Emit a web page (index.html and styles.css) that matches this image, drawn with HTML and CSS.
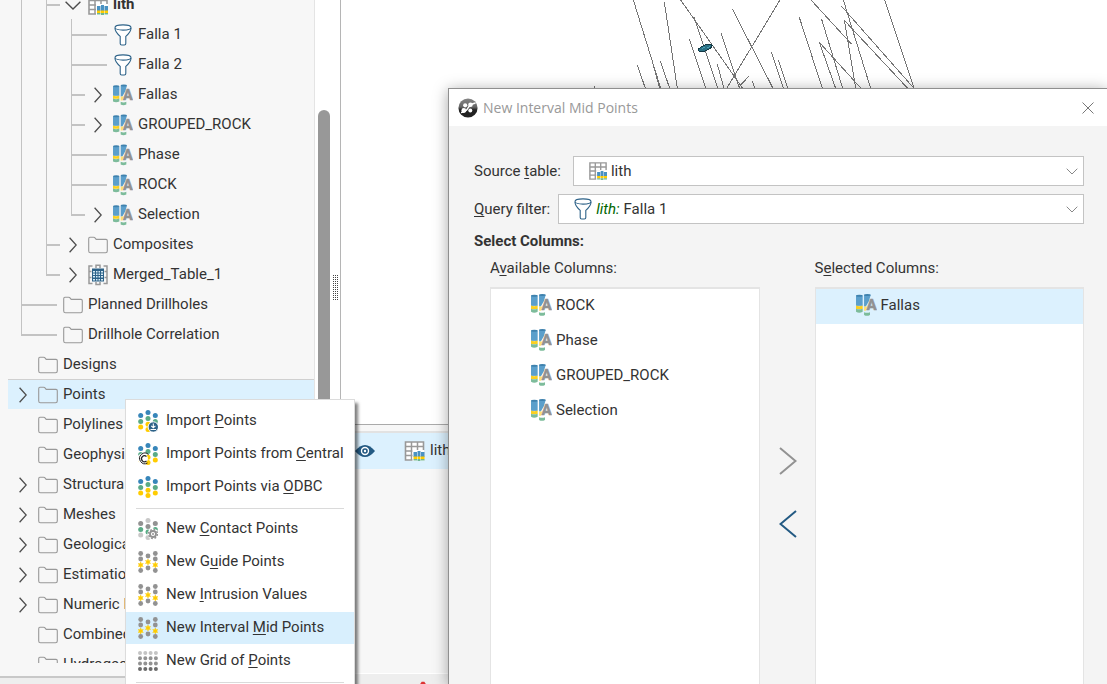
FILE: index.html
```html
<!DOCTYPE html>
<html lang="en">
<head>
<meta charset="utf-8">
<title>New Interval Mid Points</title>
<link rel="stylesheet" href="styles.css">
</head>
<body>
<svg class="defs" aria-hidden="true">
  <symbol id="i-right" viewBox="0 0 8 16"><path d="M0.6 0.8 7.2 8 .6 15.2" fill="none" stroke="#4d4d4d" stroke-width="1.3"/></symbol>
  <symbol id="i-down" viewBox="0 0 16 9"><path d="M.6 .8 8 8 15.4 .8" fill="none" stroke="#4d4d4d" stroke-width="1.4"/></symbol>
  <symbol id="i-folder" viewBox="0 0 20 17"><path d="M.7 14V2.2Q.7.9 2 .8H5.6Q6.6.8 7.200 1.600L8.200 2.900H18Q19.300 2.900 19.300 4.300V14.600Q19.300 16.300 17.600 16.300H2.500Q.7 16.300.7 14.500Z" fill="none" stroke="#999" stroke-width="1.1"/></symbol>
  <symbol id="i-filter" viewBox="0 0 20 22"><g fill="#fff" stroke="#2d6288" stroke-width="1.1"><path d="M2 4Q2 8 7.200 12.300V19.500Q7.200 21 8.700 21H11.300Q12.800 21 12.800 19.500V12.300Q18 8 18 4"/><ellipse cx="10" cy="3.500" rx="8" ry="2.600"/></g></symbol>
  <symbol id="i-column" viewBox="0 0 60 63">
    <path d="M0 5H19V34H0Z" fill="#5b9fcb"/><ellipse cx="9.500" cy="5" rx="9.500" ry="3" fill="#3f82ae"/>
    <path d="M0 33Q9 37 19 33V43H0Z" fill="#fbd021"/><path d="M0 42Q9 46 19 42V51Q9 56 0 51Z" fill="#7dbc9b"/>
    <path d="M23 3H42L37 20 28 36H23Z" fill="#5b9fcb"/><ellipse cx="32.500" cy="3" rx="9.500" ry="3" fill="#3f82ae"/>
    <path d="M23 36H33L28 48H23Z" fill="#ffe070"/><path d="M23 52Q32 56 40 52V60Q31 65 23 60Z" fill="#7dbc9b"/>
    <text x="30" y="46" class="letter">A</text>
  </symbol>
  <symbol id="i-table" viewBox="0 0 20 20">
    <path d="M1 1H19V19H1Z" fill="#fff" stroke="#999" stroke-width="1.600"/><path d="M7 1V19M13 1V12M1 5.500H19M1 10H19M1 14.500H9" stroke="#999" stroke-width="1.500" fill="none"/>
    <path d="M8 9H20V20H8Z" fill="#fff"/>
    <path d="M9 11H12.500V16H9ZM13 10H16V16H13ZM16.500 11H20V16H16.500Z" fill="#4a92c2"/><path d="M9 15.500H12.500V18H9ZM13 15.500H16V18H13ZM16.500 15.500H20V18H16.500Z" fill="#fc0"/><path d="M9 18H12.500V19.500H9ZM13 18H16V20H13ZM16.500 18H20V19.500H16.500Z" fill="#6fb592"/>
  </symbol>
  <symbol id="i-merged" viewBox="0 0 20 21">
    <path d="M4.500 1.500H1V19H4.500M15.500 1.500H19V19H15.500M1 7H3.500M1 13H3.500M16.500 7H19M16.500 13H19M8 3.500V.800H12V3.500M8 17.500V20H12V17.500" fill="none" stroke="#999" stroke-width="1.500"/>
    <path d="M4 4H16V17H4Z" fill="#2d6288"/><path d="M5 6.500H7V8H5ZM5 9H7V10.500H5ZM5 11.500H7V13H5ZM5 14.500H7V16H5ZM8 6.500H9.500V8H8ZM8 9H9.500V10.500H8ZM8 11.500H9.500V13H8ZM8 14.500H9.500V16H8ZM10.500 6.500H12V8H10.500ZM10.500 9H12V10.500H10.500ZM10.500 11.500H12V13H10.500ZM10.500 14.500H12V16H10.500ZM13 6.500H15V8H13ZM13 9H15V10.500H13ZM13 11.500H15V13H13ZM13 14.500H15V16H13Z" fill="#d8ebf5"/>
  </symbol>
  <symbol id="i-dots" viewBox="0 0 20 22">
    <g fill="#3786ba"><circle cx="2.700" cy="5.500" r="2.500"/><circle cx="10" cy="2.500" r="2.500"/><circle cx="17.300" cy="5.500" r="2.500"/></g>
    <g fill="#5aab86"><circle cx="2.700" cy="11.500" r="2.500"/><circle cx="10" cy="8.500" r="2.500"/><circle cx="17.300" cy="11.500" r="2.500"/></g>
    <g fill="#fc0"><circle cx="2.700" cy="17" r="2.500"/><circle cx="10" cy="14.300" r="2.500"/><circle cx="10" cy="19.500" r="2.500"/><circle cx="17.300" cy="17" r="2.500"/></g>
  </symbol>
  <symbol id="i-import" viewBox="0 0 20 22"><use href="#i-dots"/><circle cx="15.300" cy="17" r="5.200" fill="#2d6288" stroke="#fff"/><path d="M15.300 13.500V17.500M13.200 15.800 15.300 17.800 17.400 15.800M12.500 19.500H18.100" fill="none" stroke="#fff" stroke-width="1.100"/></symbol>
  <symbol id="i-central" viewBox="0 0 20 22"><use href="#i-dots"/><circle cx="4.700" cy="15.500" r="5.200" fill="#fff"/><path d="M10.500 11.500A5.300 5.300 0 1 0 9.500 20" fill="none" stroke="#222" stroke-width="1"/><path d="M8.500 13.500A3 3 0 1 0 8.500 18" fill="none" stroke="#222" stroke-width="1.300"/></symbol>
  <symbol id="i-contact" viewBox="0 0 20 22">
    <g fill="#c8c8c8"><circle cx="10" cy="2.500" r="2.500"/><circle cx="2.700" cy="17" r="2.500"/><circle cx="10" cy="19.500" r="2.500"/></g>
    <g fill="#929292"><circle cx="2.700" cy="5.500" r="2.500"/><circle cx="10" cy="8.500" r="2.500"/><circle cx="17.300" cy="5.500" r="2.500"/></g>
    <g fill="#5aab86"><circle cx="2.700" cy="11.500" r="2.500"/><circle cx="10" cy="14" r="2.500"/><circle cx="17.300" cy="11.500" r="2.500"/></g>
    <circle cx="15" cy="16" r="5.600" fill="#fff"/><circle cx="15" cy="16" r="3" fill="#fff" stroke="#929292" stroke-width="1.800"/><circle cx="15" cy="16" r="4.500" fill="none" stroke="#929292" stroke-width="1.500" stroke-dasharray="1.800 1.730"/><circle cx="15" cy="16" r="1" fill="#929292"/>
  </symbol>
  <symbol id="i-stars" viewBox="0 0 20 22">
    <g fill="#929292"><circle cx="2.700" cy="2.500" r="2.400"/><circle cx="17.300" cy="2.500" r="2.400"/><circle cx="2.700" cy="8" r="2.400"/><circle cx="17.300" cy="8" r="2.400"/><circle cx="10" cy="5" r="2.400"/><circle cx="10" cy="17" r="2.400"/><circle cx="2.700" cy="19.500" r="2.400"/><circle cx="17.300" cy="19.500" r="2.400"/></g>
    <path id="star" d="M10 8 10.700 9.800 12.600 9.500 11.400 11 12.600 12.500 10.700 12.200 10 14 9.300 12.200 7.400 12.500 8.600 11 7.400 9.500 9.300 9.800Z" fill="#fc0" stroke="#fc0" stroke-width=".5"/><use href="#star" x="-7.300" y="3"/><use href="#star" x="7.300" y="3"/>
  </symbol>
  <symbol id="i-grid" viewBox="0 0 20 20">
    <g fill="none" stroke-width="4" stroke-linecap="round" stroke-dasharray="0 5.300"><path d="M2 2H19" stroke="#c4c4c4"/><path d="M2 7.300H19" stroke="#929292"/><path d="M2 12.600H19" stroke="#929292"/><path d="M2 17.900H19" stroke="#6c6c6c"/></g>
  </symbol>
</svg>

<div class="app">
  <aside class="side">
    <div class="side-body">
      <div class="tree-clip">
        <ul class="tree" role="tree" aria-label="Project">
          <li class="node bold"><i class="g v"></i><i class="g tee"></i><i class="exp open"><svg><use href="#i-down"/></svg></i><svg class="ico"><use href="#i-table"/></svg><span>lith</span></li>
          <li class="node"><i class="g v"></i><i class="g v"></i><i class="g tee"></i><i class="exp leaf"></i><svg class="ico"><use href="#i-filter"/></svg><span>Falla 1</span></li>
          <li class="node"><i class="g v"></i><i class="g v"></i><i class="g tee"></i><i class="exp leaf"></i><svg class="ico"><use href="#i-filter"/></svg><span>Falla 2</span></li>
          <li class="node"><i class="g v"></i><i class="g v"></i><i class="g tee"></i><i class="exp"><svg><use href="#i-right"/></svg></i><svg class="ico"><use href="#i-column"/></svg><span>Fallas</span></li>
          <li class="node"><i class="g v"></i><i class="g v"></i><i class="g tee"></i><i class="exp"><svg><use href="#i-right"/></svg></i><svg class="ico"><use href="#i-column"/></svg><span>GROUPED_ROCK</span></li>
          <li class="node"><i class="g v"></i><i class="g v"></i><i class="g tee"></i><i class="exp leaf"></i><svg class="ico"><use href="#i-column"/></svg><span>Phase</span></li>
          <li class="node"><i class="g v"></i><i class="g v"></i><i class="g tee"></i><i class="exp leaf"></i><svg class="ico"><use href="#i-column"/></svg><span>ROCK</span></li>
          <li class="node"><i class="g v"></i><i class="g v"></i><i class="g end"></i><i class="exp"><svg><use href="#i-right"/></svg></i><svg class="ico"><use href="#i-column"/></svg><span>Selection</span></li>
          <li class="node"><i class="g v"></i><i class="g tee"></i><i class="exp"><svg><use href="#i-right"/></svg></i><svg class="ico"><use href="#i-folder"/></svg><span>Composites</span></li>
          <li class="node"><i class="g v"></i><i class="g end"></i><i class="exp"><svg><use href="#i-right"/></svg></i><svg class="ico"><use href="#i-merged"/></svg><span>Merged_Table_1</span></li>
          <li class="node"><i class="g tee"></i><i class="exp leaf"></i><svg class="ico"><use href="#i-folder"/></svg><span>Planned Drillholes</span></li>
          <li class="node"><i class="g end"></i><i class="exp leaf"></i><svg class="ico"><use href="#i-folder"/></svg><span>Drillhole Correlation</span></li>
          <li class="node"><i class="exp"></i><svg class="ico"><use href="#i-folder"/></svg><span>Designs</span></li>
          <li class="node selected"><i class="exp"><svg><use href="#i-right"/></svg></i><svg class="ico"><use href="#i-folder"/></svg><span>Points</span></li>
          <li class="node"><i class="exp"></i><svg class="ico"><use href="#i-folder"/></svg><span>Polylines</span></li>
          <li class="node"><i class="exp"></i><svg class="ico"><use href="#i-folder"/></svg><span>Geophysi</span></li>
          <li class="node"><i class="exp"><svg><use href="#i-right"/></svg></i><svg class="ico"><use href="#i-folder"/></svg><span>Structura</span></li>
          <li class="node"><i class="exp"><svg><use href="#i-right"/></svg></i><svg class="ico"><use href="#i-folder"/></svg><span>Meshes</span></li>
          <li class="node"><i class="exp"><svg><use href="#i-right"/></svg></i><svg class="ico"><use href="#i-folder"/></svg><span>Geologica</span></li>
          <li class="node"><i class="exp"><svg><use href="#i-right"/></svg></i><svg class="ico"><use href="#i-folder"/></svg><span>Estimatio</span></li>
          <li class="node"><i class="exp"><svg><use href="#i-right"/></svg></i><svg class="ico"><use href="#i-folder"/></svg><span>Numeric M</span></li>
          <li class="node"><i class="exp"></i><svg class="ico"><use href="#i-folder"/></svg><span>Combined</span></li>
          <li class="node"><i class="exp"></i><svg class="ico"><use href="#i-folder"/></svg><span>Hydrogeo</span></li>
        </ul>
      </div>
      <div class="track"><div class="thumb"></div></div>
      <div class="split"><div class="grip"></div></div>
    </div>
    <div class="side-foot"></div>
  </aside>

  <main class="main">
    <div class="scene">
      <svg class="holes" viewBox="0 0 1050 267" aria-hidden="true">
        <path d="M130 0 212 265M183 170 209 265M142 195 166 265M211 183 239 265M223 6 262 265M272 0 458 265M298 118 347 265M312 52 383 265M382 193 402 265M393 99 448 265M427 27 549 265M570 0 410 265M476 229 446 262M487 243 495 265M544 156 580 265M565 180 593 265M628 52 697 265M695 58 758 265M663 0 785 133M754 18 972 265M760 0 842 265M763 61 797 265M763 61 953 265M688 127 737 265M688 127 813 265M884 0 972 265M13 258V265"/>
        <path class="disc" d="M325 147 341 136 362 132 367 137 361 145 344 153 328 155Z"/><path class="shine" d="M335 146 345 142M350 145 361 138"/>
      </svg>
    </div>
    <section class="layers" aria-label="Shape list">
      <div class="layer">
        <svg class="eye" viewBox="0 0 20 14"><path d="M0 7Q5 1 10 1T20 7Q15 13 10 13T0 7Z" fill="#235a83"/><circle cx="10" cy="7" r="4.200" fill="#fff"/><circle cx="10" cy="7" r="2.800" fill="#235a83"/><circle cx="10" cy="7" r="1.200" fill="#fff"/></svg>
        <svg class="ico big"><use href="#i-table"/></svg><span>lith</span>
      </div>
      <div class="layers-foot"><svg class="mark" viewBox="0 0 8 6"><path d="M0 4 2 1H6L8 4V6H0Z" fill="#d33"/></svg></div>
    </section>
  </main>
</div>

<div class="menu" role="menu">
  <button class="item" role="menuitem"><svg><use href="#i-import"/></svg><span>Import <u>P</u>oints</span></button>
  <button class="item" role="menuitem"><svg><use href="#i-central"/></svg><span>Import Points from <u>C</u>entral</span></button>
  <button class="item" role="menuitem"><svg><use href="#i-dots"/></svg><span>Import Points via <u>O</u>DBC</span></button>
  <hr>
  <button class="item" role="menuitem"><svg><use href="#i-contact"/></svg><span>New <u>C</u>ontact Points</span></button>
  <button class="item" role="menuitem"><svg><use href="#i-stars"/></svg><span>New G<u>u</u>ide Points</span></button>
  <button class="item" role="menuitem"><svg><use href="#i-stars"/></svg><span>New <u>I</u>ntrusion Values</span></button>
  <button class="item hot" role="menuitem"><svg><use href="#i-stars"/></svg><span>New Interval <u>M</u>id Points</span></button>
  <button class="item" role="menuitem"><svg><use href="#i-grid"/></svg><span>New Grid of <u>P</u>oints</span></button>
  <hr>
</div>

<div class="dialog" role="dialog" aria-labelledby="title">
  <header class="titlebar">
    <svg class="logo" viewBox="0 0 20 20"><defs><linearGradient id="lg" x1="0" y1="0" x2="0" y2="1"><stop offset="0" stop-color="#858585"/><stop offset=".45" stop-color="#666"/><stop offset=".6" stop-color="#222"/><stop offset="1" stop-color="#222"/></linearGradient></defs><circle cx="10" cy="10" r="9.600" fill="url(#lg)"/><path d="M3 14.500Q8 14 10 10T17.500 5" stroke="#fff" stroke-width="1.600" fill="none"/><circle cx="7.200" cy="7.300" r="2.100" fill="#fff"/><circle cx="12.500" cy="6.800" r="2.300" fill="#fff"/><circle cx="5.800" cy="12.500" r="2.400" fill="#fff"/><circle cx="12.300" cy="12.500" r="2" fill="#fff"/></svg>
    <h1 id="title">New Interval Mid Points</h1>
    <button class="close" aria-label="Close"><svg viewBox="0 0 12 12"><path d="M.5.5 11.500 11.500M11.500.5.5 11.500" stroke="#777" stroke-width="1"/></svg></button>
  </header>
  <div class="content">
    <div class="field">
      <label for="source">Source <u>t</u>able:</label>
      <div class="combo"><svg class="ico sm"><use href="#i-table"/></svg><select id="source"><option>lith</option></select><svg class="arrow" viewBox="0 0 12 7"><path d="M.7.7 6 6 11.300.7"/></svg></div>
    </div>
    <div class="field">
      <label for="filter"><u>Q</u>uery filter:</label>
      <div class="combo"><svg class="ico"><use href="#i-filter"/></svg><em>lith:</em><select id="filter"><option>Falla 1</option></select><svg class="arrow" viewBox="0 0 12 7"><path d="M.7.7 6 6 11.300.7"/></svg></div>
    </div>
    <h2>Select Columns:</h2>
    <div class="columns">
      <div class="col">
        <span class="cap" id="avail">A<u>v</u>ailable Columns:</span>
        <ul class="list" role="listbox" aria-labelledby="avail">
          <li role="option"><svg><use href="#i-column"/></svg>ROCK</li>
          <li role="option"><svg><use href="#i-column"/></svg>Phase</li>
          <li role="option"><svg><use href="#i-column"/></svg>GROUPED_ROCK</li>
          <li role="option"><svg><use href="#i-column"/></svg>Selection</li>
        </ul>
      </div>
      <div class="moves">
        <button aria-label="Add column"><svg viewBox="0 0 18 30"><path d="M1 2 16.500 15 1 28" stroke="#929292"/></svg></button>
        <button aria-label="Remove column"><svg viewBox="0 0 18 30"><path d="M17 2 1.500 15 17 28" stroke="#235a83"/></svg></button>
      </div>
      <div class="col">
        <span class="cap" id="sel">S<u>e</u>lected Columns:</span>
        <ul class="list" role="listbox" aria-labelledby="sel">
          <li role="option" aria-selected="true"><svg><use href="#i-column"/></svg>Fallas</li>
        </ul>
      </div>
    </div>
  </div>
</div>
</body>
</html>
```

FILE: styles.css
```css
* { box-sizing: border-box; }
body {
  margin: 0;
  height: 100vh;
  overflow: hidden;
  position: relative;
  font: 15px/20px Roboto, "Liberation Sans", sans-serif;
  color: #333;
  background: #fff;
}
ul { list-style: none; margin: 0; padding: 0; }
button { font: inherit; color: inherit; border: 0; background: none; padding: 0; }
u { text-underline-offset: 2px; text-decoration-thickness: 1px; }
svg { display: block; flex: none; }
.defs { position: absolute; width: 0; height: 0; }
.letter { font: 900 43px Roboto, sans-serif; fill: #929292; stroke: #929292; stroke-width: 1px; }
.ico { width: 20px; height: 22px; }
.sm { width: 18px; height: 18px; }
.big { width: 21px; height: 20px; }

.app { display: flex; height: 100%; }

/* Project tree */
.side { width: 341px; flex: none; display: flex; flex-direction: column; background: #f7f7f7; }
.side-body { flex: 1; min-height: 0; display: flex; border-right: 1px solid #b5b5b5; }
.tree-clip { flex: 1; overflow: hidden; padding-left: 8px; margin-bottom: 13px; }
.tree { margin-top: -11px; }
.node { display: flex; align-items: center; height: 30px; padding-left: 2px; white-space: nowrap; }
.node .ico { margin: 2px 5px 0 3px; }
.bold { font-weight: 700; }
.selected { background: #dcf1fe; box-shadow: inset 0 1px #d0d0d0; }
.g, .exp { width: 25px; height: 30px; flex: none; background-repeat: no-repeat; }
.v { background-image: linear-gradient(#c3c3c3, #c3c3c3); background-size: 1px 30px; background-position: 11px 0; }
.tee, .end { background-image: linear-gradient(#c3c3c3, #c3c3c3), linear-gradient(#c3c3c3, #c3c3c3); }
.tee { background-size: 1px 30px, 14px 2px; background-position: 11px 0, 11px 15px; }
.end { background-size: 1px 16px, 14px 2px; background-position: 11px 0, 11px 15px; }
.leaf { background-image: linear-gradient(#c3c3c3, #c3c3c3); background-size: 22px 2px; background-position: 0 15px; }
.exp { display: flex; align-items: center; padding: 2px 0 0 9px; }
.exp svg { width: 8px; height: 16px; }
.open { padding-left: 5px; }
.open svg { width: 16px; height: 9px; }
.track { width: 18px; background: #fff; border-left: 1px solid #e4e4e4; padding: 110px 2px 0 3px; }
.thumb { width: 12px; height: 100%; border-radius: 6px 6px 0 0; background: #989898; }
.split { width: 8px; background: #fff; padding: 275px 2px 0 1px; }
.grip { width: 5px; height: 26px; background: repeating-linear-gradient(90deg, transparent 0 1px, #fff 1px 2px), repeating-linear-gradient(#444 0 1px, #fff 1px 2px); }
.side-foot { height: 8px; background: #eee; border-top: 2px solid #c8c8c8; }

/* Scene and shape list */
.main { flex: 1; min-width: 0; display: flex; flex-direction: column; }
.scene { flex: 1; padding-left: 249px; background: #fff; }
.holes { width: 350px; height: 89px; fill: none; stroke: #757575; stroke-width: 3; shape-rendering: crispEdges; }
.disc { fill: #2b7286; stroke: #123844; }
.shine { stroke: #4ba0b5; }
.layers { height: 260px; display: flex; flex-direction: column; background: #f7f7f7; border-top: 1px solid #aaa; padding-top: 6px; }
.layer { display: flex; align-items: center; height: 38px; padding-left: 14px; background: #dcf1fe; border-top: 2px solid #e2e2e2; }
.eye { width: 20px; height: 14px; margin-right: 29px; }
.layer span { margin: 0 0 2px 5px; }
.layers-foot { margin-top: auto; height: 11px; padding: 7px 0 0 79px; background: #eee; border-top: 1px solid #fff; }
.mark { width: 6px; height: 4px; }

/* Context menu */
.menu {
  position: absolute; left: 125px; top: 399px; width: 230px;
  display: flex; flex-direction: column; gap: 1px;
  padding: 5px 0; height: 300px;
  background: #fff; border: 1px solid #dcdcdc;
  box-shadow: 3px 4px 3px rgba(0, 0, 0, .5);
}
.item { display: flex; align-items: center; gap: 8px; height: 32px; flex: none; padding-left: 12px; text-align: left; white-space: nowrap; }
.item svg { width: 20px; height: 22px; }
.item span { margin-bottom: 2px; }
.hot { background: #d8effd; }
.menu hr { width: 208px; height: 1px; flex: none; margin: 4px 10px 3px; border: 0; background: #dadada; }

/* Dialog */
.dialog {
  position: absolute; left: 448px; top: 88px; right: 0; bottom: 0;
  display: flex; flex-direction: column;
  background: #f4f4f4; border: solid #8f8f8f; border-width: 1px 0 0 1px;
  box-shadow: 0 2px 14px rgba(0, 0, 0, .35);
}
.titlebar { display: flex; align-items: center; height: 37px; padding: 0 13px 0 9px; background: #fff; }
.logo { width: 20px; height: 20px; }
h1 { flex: 1; margin: 0 0 0 5px; font: 14px/20px "Open Sans", sans-serif; color: #999; }
.close svg { width: 12px; height: 12px; }
.content { flex: 1; display: flex; flex-direction: column; padding: 30px 23px 0 25px; }
.field { display: flex; align-items: center; margin-bottom: 8px; }
.field label { flex: none; }
.combo { flex: 1; display: flex; align-items: center; height: 30px; padding: 0 5px 0 15px; background: #fff; border: 1px solid #c3c3c3; }
.field:first-child .combo { margin-left: 12px; }
.field:nth-child(2) .combo { margin-left: 8px; padding-left: 14px; }
.combo select { flex: 1; appearance: none; border: 0; background: none; font: inherit; color: inherit; margin: 0 0 0 4px; padding: 0; height: 26px; }
.combo em { color: #060; margin-left: 3px; }
.arrow { width: 12px; height: 7px; fill: none; stroke: #888; }
h2 { margin: -1px 0 7px; font: 700 15px/20px Roboto, sans-serif; }
.columns { flex: 1; display: flex; padding-left: 16px; }
.col { flex: 1; display: flex; flex-direction: column; }
.cap { margin-bottom: 9px; }
.list { flex: 1; background: #fff; border: solid #e4e4e4; border-width: 2px 1px 0; }
.list li { display: flex; align-items: center; gap: 4px; height: 35px; padding: 0 0 3px 40px; }
.list svg { width: 21px; height: 22px; }
.list [aria-selected="true"] { background: #dcf1fe; }
.moves { width: 55px; display: flex; flex-direction: column; align-items: center; gap: 33px; padding: 188px 0 0 2px; }
.moves svg { width: 18px; height: 30px; fill: none; stroke-width: 2; }
```
